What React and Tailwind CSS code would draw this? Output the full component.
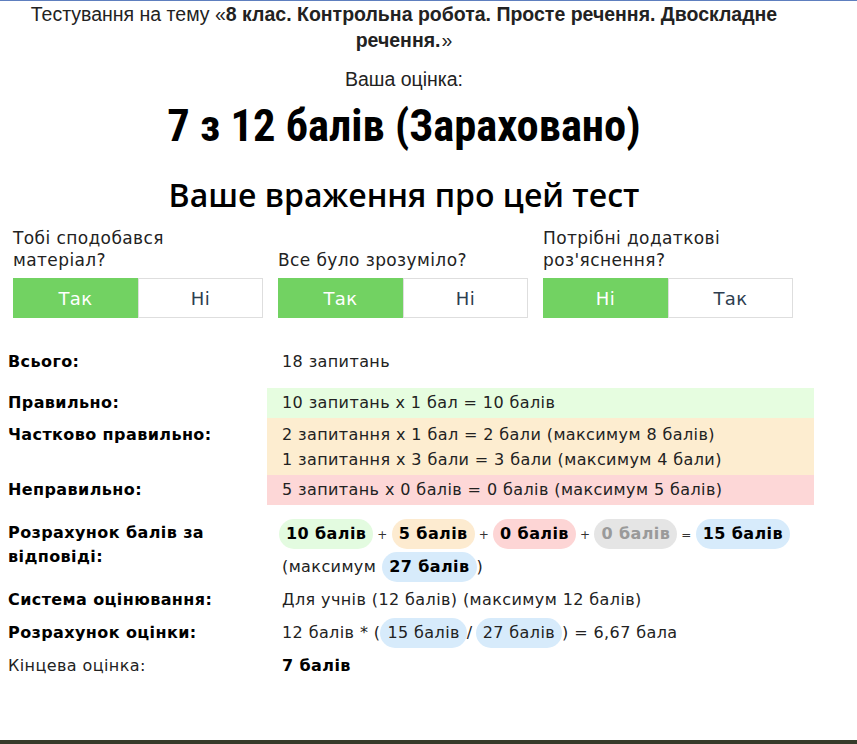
import React from "react";

const F = { fontFamily: '"DejaVu Sans", "Open Sans", sans-serif', letterSpacing: "0.4px" };
const A = { fontFamily: '"Liberation Sans", Arial, sans-serif', letterSpacing: "0" };
const N = { fontFamily: '"Liberation Sans Narrow", "Roboto Condensed", Roboto, sans-serif', letterSpacing: "0" };
const O = { fontFamily: '"Open Sans", sans-serif', letterSpacing: "0" };

function Question({ label, first, second }) {
  return (
    <div className="w-[250px] flex flex-col">
      <div className="flex-1 flex items-end text-[17px] leading-[22px] text-[#222] pb-[7px]">{label}</div>
      <div className="flex h-[40px]">
        <div className="w-1/2 bg-[#72d262] text-white text-[18px] flex items-center justify-center">{first}</div>
        <div className="w-1/2 border border-[#dedede] text-[#2d3e50] text-[18px] flex items-center justify-center">{second}</div>
      </div>
    </div>
  );
}

function Pill({ children, cls, bold = true }) {
  return (
    <span className={`inline-block rounded-full px-[7px] leading-[30px] ${bold ? "font-bold" : ""} ${cls}`}>{children}</span>
  );
}

function Op({ children }) {
  return <span className="text-[12px] mx-[4px] text-[#333]">{children}</span>;
}

export default function App() {
  return (
    <div className="relative w-[857px] h-[744px] bg-white border-t border-[#5e7fbf] overflow-hidden" style={F}>
      <div className="w-[808px]">
        <div className="text-center text-[19.5px] leading-[26px] text-[#222] px-[18px]" style={A}>
          Тестування на тему «<b>8 клас. Контрольна робота. Просте речення. Двоскладне речення.</b><span className="ml-[1px]">»</span>
        </div>
        <div className="text-center text-[19.5px] leading-[26px] mt-[13px] text-[#222]" style={A}>Ваша оцінка:</div>
        <div className="text-center text-[44.5px] font-bold leading-[44px] mt-[12px] text-black" style={N}>7 з 12 балів (Зараховано)</div>
        <div className="text-center text-[32px] font-semibold leading-[36px] mt-[29px] text-black" style={O}>Ваше враження про цей тест</div>
        <div className="flex gap-[15px] pl-[13px] mt-[14px]">
          <Question label={<span>Тобі сподобався<br />матеріал?</span>} first="Так" second="Ні" />
          <Question label="Все було зрозуміло?" first="Так" second="Ні" />
          <Question label={<span>Потрібні додаткові<br />роз'яснення?</span>} first="Ні" second="Так" />
        </div>
      </div>

      <div className="pl-[8px] mt-[28px] text-[16px] text-[#222]">
        <div className="grid grid-cols-[259px_547px]">
          <div className="font-bold text-black leading-[25px] py-[3px]">Всього:</div>
          <div className="pl-[15px] leading-[25px] py-[3px]">18 запитань</div>
        </div>
        <div className="grid grid-cols-[259px_547px] mt-[11px]">
          <div className="font-bold text-black leading-[26px] py-[2px]">Правильно:</div>
          <div className="pl-[15px] leading-[26px] py-[2px] bg-[#e6fde0]">10 запитань х 1 бал = 10 балів</div>
          <div className="font-bold text-black leading-[25px] pt-[4px] pb-[3px]">Частково правильно:</div>
          <div className="pl-[15px] leading-[25px] pt-[4px] pb-[3px] bg-[#fdedd0]">
            <div>2 запитання х 1 бал = 2 бали (максимум 8 балів)</div>
            <div>1 запитання х 3 бали = 3 бали (максимум 4 бали)</div>
          </div>
          <div className="font-bold text-black leading-[26px] py-[2px]">Неправильно:</div>
          <div className="pl-[15px] leading-[26px] py-[2px] bg-[#fdd7d7]">5 запитань х 0 балів = 0 балів (максимум 5 балів)</div>
        </div>
        <div className="grid grid-cols-[259px_547px] mt-[13px] gap-y-[3px]">
          <div className="font-bold text-black leading-[24px] pt-[3px]">Розрахунок балів за<br />відповіді:</div>
          <div className="pl-[12px] leading-[31px]">
            <Pill cls="bg-[#e3fbe0] text-black">10 балів</Pill>
            <Op>+</Op>
            <Pill cls="bg-[#fdebd0] text-black">5 балів</Pill>
            <Op>+</Op>
            <Pill cls="bg-[#fdd5d5] text-black">0 балів</Pill>
            <Op>+</Op>
            <Pill cls="bg-[#e5e5e5] text-[#9a9a9a]">0 балів</Pill>
            <Op>=</Op>
            <Pill cls="bg-[#d7ebfb] text-black">15 балів</Pill>
            <br />
            <span className="ml-[3px] mr-[6px]">(максимум</span>
            <Pill cls="bg-[#d7ebfb] text-black">27 балів</Pill>
            <span>)</span>
          </div>
          <div className="font-bold text-black leading-[30px]">Система оцінювання:</div>
          <div className="pl-[15px] leading-[30px]">Для учнів (12 балів) (максимум 12 балів)</div>
          <div className="font-bold text-black leading-[30px]">Розрахунок оцінки:</div>
          <div className="pl-[15px] leading-[30px]">
            <span>12 балів * (</span>
            <Pill cls="bg-[#d7ebfb]" bold={false}>15 балів</Pill>
            <span className="mr-[3px]">/</span>
            <Pill cls="bg-[#d7ebfb]" bold={false}>27 балів</Pill>
            <span>) = 6,67 бала</span>
          </div>
          <div className="leading-[30px]">Кінцева оцінка:</div>
          <div className="pl-[15px] leading-[30px] font-bold text-black">7 балів</div>
        </div>
      </div>

      <div className="absolute left-0 right-0 bottom-0 h-[4px] bg-[#363b2a]" />
    </div>
  );
}
